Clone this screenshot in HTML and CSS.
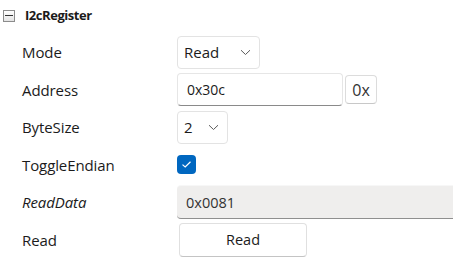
FILE: index.html
```html
<!DOCTYPE html>
<html>
<head>
<meta charset="utf-8">
<link rel="stylesheet" href="styles.css">
</head>
<body>
<div class="grid">
  <div class="header">
    <span class="toggle"><span class="minus"></span></span>
    <span class="title">I2cRegister</span>
  </div>
  <div class="props">
    <div class="label">Mode</div>
    <div class="value">
      <div class="select sel-mode"><span>Read</span><svg class="chev" width="11" height="7" viewBox="0 0 11 7"><path d="M1 1.2 L5.5 5.5 L10 1.2" fill="none" stroke="#5a5a5a" stroke-width="1"/></svg></div>
    </div>

    <div class="label">Address</div>
    <div class="value">
      <div class="input addr">0x30c</div>
      <div class="hexbtn">0x</div>
    </div>

    <div class="label">ByteSize</div>
    <div class="value">
      <div class="select sel-size"><span>2</span><svg class="chev" width="11" height="7" viewBox="0 0 11 7"><path d="M1 1.2 L5.5 5.5 L10 1.2" fill="none" stroke="#5a5a5a" stroke-width="1"/></svg></div>
    </div>

    <div class="label">ToggleEndian</div>
    <div class="value">
      <div class="check"><svg width="11" height="9" viewBox="0 0 11 9"><path d="M1.5 4.6 L4.2 7 L9.5 1.8" fill="none" stroke="#ffffff" stroke-width="1.2"/></svg></div>
    </div>

    <div class="label italic">ReadData</div>
    <div class="value">
      <div class="readonly">0x0081</div>
    </div>

    <div class="label">Read</div>
    <div class="value">
      <div class="button">Read</div>
    </div>
  </div>
</div>
</body>
</html>
```
FILE: styles.css
```css
html, body {
  margin: 0;
  padding: 0;
  background: #ffffff;
}
body {
  font-family: "Open Sans", "Noto Sans", sans-serif;
  font-size: 14px;
  color: #1b1b1b;
  width: 453px;
  height: 268px;
  overflow: hidden;
}
.header {
  display: flex;
  align-items: center;
  height: 30px;
  padding-left: 3px;
  gap: 10px;
}
.toggle {
  box-sizing: border-box;
  width: 12px;
  height: 12px;
  border: 1px solid #8c8c8c;
  background: linear-gradient(#ffffff, #e4e4e4);
  display: flex;
  align-items: center;
  justify-content: center;
  margin-top: 1px;
}
.minus {
  width: 8px;
  height: 1.5px;
  background: #333;
}
.title {
  font-weight: 700;
  font-size: 13px;
  letter-spacing: -0.45px;
}
.props {
  display: grid;
  grid-template-columns: 177px 1fr;
  grid-auto-rows: 34px;
  row-gap: 3.5px;
  margin-top: 5px;
}
.label {
  display: flex;
  align-items: center;
  padding-left: 22px;
  font-size: 15px;
  letter-spacing: -0.1px;
}
.italic {
  font-style: italic;
}
.value {
  display: flex;
  align-items: center;
  gap: 2px;
}
.select {
  box-sizing: border-box;
  height: 33px;
  border: 1px solid #e3e3e3;
  border-radius: 4px;
  display: flex;
  align-items: center;
  justify-content: space-between;
  padding: 0 8px 0 6px;
  font-size: 15px;
}
.sel-mode { width: 83px; }
.sel-size { width: 51px; }
.chev { margin-top: 1px; }
.input {
  box-sizing: border-box;
  height: 33px;
  border: 1px solid #e6e6e6;
  border-bottom: 1px solid #8a8a8a;
  border-radius: 4px;
  display: flex;
  align-items: center;
  padding-left: 9px;
  font-size: 14px;
}
.addr { width: 166px; }
.hexbtn {
  box-sizing: border-box;
  width: 32px;
  height: 29px;
  border: 1px solid #dcdcdc;
  border-bottom-color: #c8c8c8;
  border-radius: 4px;
  display: flex;
  align-items: center;
  justify-content: center;
  font-size: 16px;
  color: #333;
}
.check {
  width: 19px;
  height: 19px;
  border-radius: 4px;
  background: #0067c0;
  display: flex;
  align-items: center;
  justify-content: center;
}
.readonly {
  box-sizing: border-box;
  flex: 1;
  height: 34px;
  background: #efeeed;
  border-top: 1px solid #f7f7f7;
  border-bottom: 1px solid #8f8f8f;
  border-radius: 4px 0 0 4px;
  display: flex;
  align-items: center;
  padding-left: 9px;
  font-size: 14.5px;
  color: #333;
}
.button {
  box-sizing: border-box;
  width: 128px;
  height: 34px;
  margin-left: 2px;
  border: 1px solid #e0e0e0;
  border-bottom-color: #c4c4c4;
  border-radius: 4px;
  display: flex;
  align-items: center;
  justify-content: center;
  font-size: 14.5px;
}
```
